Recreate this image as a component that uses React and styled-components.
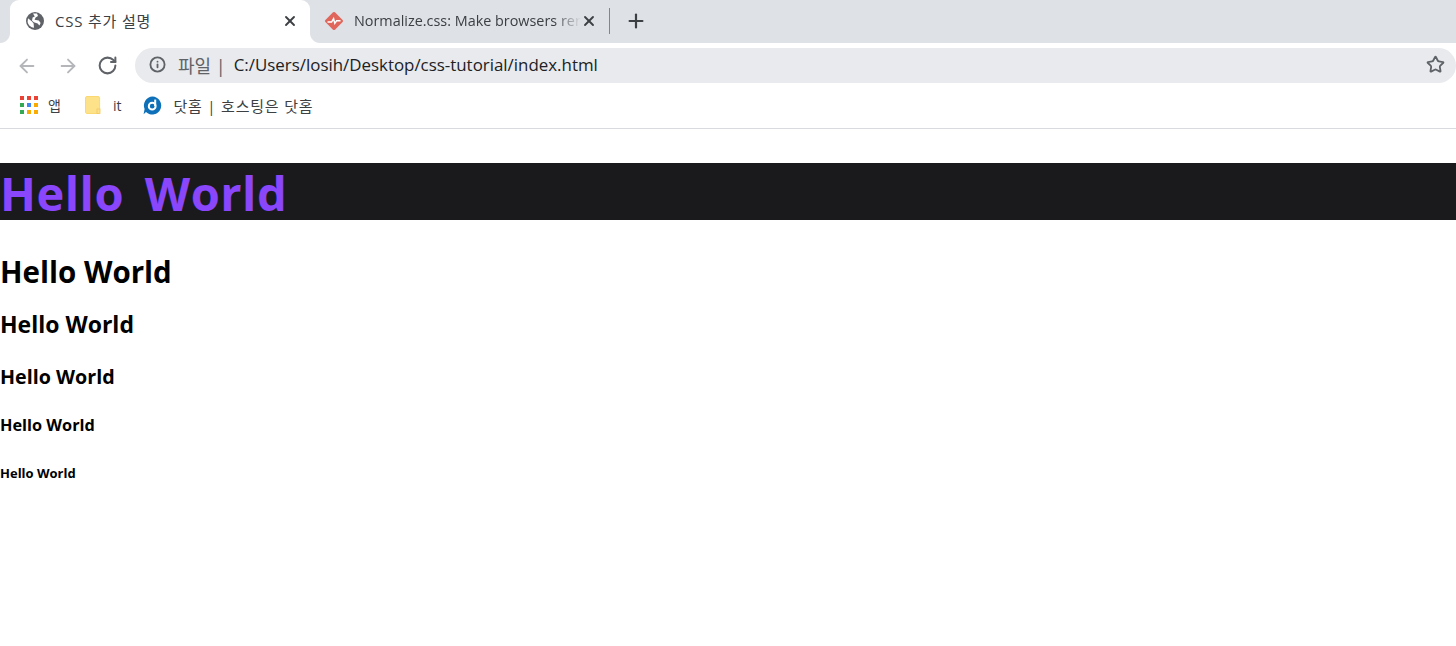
import React from 'react';
import styled, { createGlobalStyle } from 'styled-components';
import { ArrowLeft, ArrowRight, Info, Plus, RotateCw, Star, X } from 'lucide-react';

const GlobalStyle = createGlobalStyle`
  html, body {
    margin: 0;
    padding: 0;
    background: #fff;
    overflow: hidden;
    font-family: "Open Sans", "Noto Sans CJK KR", sans-serif;
  }
`;

const TabStrip = styled.div`
  display: flex;
  align-items: flex-end;
  height: 43px;
  padding-left: 10px;
  background: #dee1e6;
`;

const Tab = styled.div`
  position: relative;
  display: flex;
  align-items: center;
  box-sizing: border-box;
  width: ${(p) => p.$width}px;
  height: 43px;
  padding: 0 ${(p) => p.$right}px 2px ${(p) => p.$left}px;
  border-radius: 9px 9px 0 0;
  background: ${(p) => (p.$active ? '#fff' : 'transparent')};
  color: #3c4043;
  font-size: 14px;

  ${(p) =>
    p.$active &&
    `
    &::before, &::after {
      content: '';
      position: absolute;
      bottom: 0;
      width: 10px;
      height: 10px;
    }
    &::before {
      left: -10px;
      background: radial-gradient(circle at 0 0, #dee1e6 9.5px, #fff 10.5px);
    }
    &::after {
      right: -10px;
      background: radial-gradient(circle at 100% 0, #dee1e6 9.5px, #fff 10.5px);
    }
  `}
`;

const TabTitle = styled.span`
  flex: 1;
  margin-left: ${(p) => p.$gap}px;
  overflow: hidden;
  white-space: nowrap;
  font-size: ${(p) => p.$size}px;
  letter-spacing: ${(p) => p.$spacing || 0}px;
  -webkit-mask-image: ${(p) => (p.$fade ? 'linear-gradient(to right, #000 88%, transparent 100%)' : 'none')};
`;

const CloseIcon = styled(X)`
  flex: none;
  width: 16px;
  height: 16px;
  color: #3c4043;
  stroke-width: 2.8;
`;

const TabDivider = styled.div`
  align-self: center;
  width: 1px;
  height: 26px;
  margin: 0 0 2px 5px;
  background: #80868b;
`;

const NewTab = styled(Plus)`
  align-self: center;
  width: 22px;
  height: 22px;
  margin: 0 0 2px 15px;
  color: #3c4043;
  stroke-width: 2.4;
`;

const Toolbar = styled.div`
  display: flex;
  align-items: center;
  height: 45px;
  padding-left: 16px;
`;

const NavIcon = styled.span`
  display: flex;
  width: 24px;
  margin-right: ${(p) => p.$gap}px;
  color: ${(p) => (p.$dim ? '#b4b6b9' : '#5f6368')};
`;

const Omnibox = styled.div`
  flex: 1;
  display: flex;
  align-items: center;
  height: 35px;
  padding: 0 11px 2px 14px;
  box-sizing: border-box;
  border-radius: 18px;
  background: #e8eaed;
`;

const Security = styled.span`
  margin-left: 12px;
  color: #5f6368;
  font-size: 18px;
  white-space: pre;
`;

const Url = styled.span`
  flex: 1;
  margin-left: 8px;
  color: #202124;
  font-size: 16.9px;
`;

const BookmarkBar = styled.div`
  display: flex;
  align-items: center;
  box-sizing: border-box;
  height: 41px;
  padding: 0 0 6px 20px;
  border-bottom: 1px solid #d9dadf;
  color: #3c4043;
  font-size: 14px;
`;

const Bookmark = styled.div`
  display: flex;
  align-items: center;
  margin-right: ${(p) => p.$gap}px;
`;

const BookmarkLabel = styled.span`
  margin-left: ${(p) => p.$gap}px;
  white-space: pre;
  font-size: ${(p) => p.$size || 14}px;
  letter-spacing: ${(p) => p.$spacing || 0}px;
`;

const AppsGrid = styled.div`
  display: grid;
  grid-template-columns: repeat(3, 4px);
  grid-auto-rows: 4px;
  gap: 3px;
`;

const AppsDot = styled.i`
  display: block;
  background: ${(p) => p.$color};
`;

const Page = styled.main`
  padding-top: 34px;
  color: #000;
  font-weight: 700;
  line-height: 1;
`;

const Title = styled.h1`
  margin: 0 0 33px;
  height: 57px;
  background: #1a1a1c;
  color: #8a46fa;
  font-size: 47px;
  line-height: 60px;
  letter-spacing: 0.5px;
  word-spacing: 8px;
`;

const Heading = styled.div`
  height: ${(p) => p.$height}px;
  font-size: ${(p) => p.$size}px;
  line-height: ${(p) => p.$height}px;
  margin-bottom: ${(p) => p.$after || 0}px;
`;

const appsColors = ['#ea4335', '#ea4335', '#ea4335', '#34a853', '#4285f4', '#f9ab00', '#34a853', '#f9ab00', '#f9ab00'];

const GlobeIcon = () => (
  <svg width="18" height="18" viewBox="0 0 18 18">
    <circle cx="9" cy="9" r="9" fill="#5f6368" />
    <path
      d="M2 6.2 6 9.6 7.6 11.4 8 15.8C5 15.6 2 13 1.6 9.8ZM7 1.4 11 1.6 12 4 9.6 5.6 8.6 7.8 12.8 8.6 14.6 11 13.4 13.6 11.6 11.4 7.8 10.2 6 8.4 6.6 5.6 8.8 4.4Z"
      fill="#fff"
    />
  </svg>
);

const DiamondIcon = () => (
  <svg width="20" height="20" viewBox="0 0 20 20">
    <rect x="3.2" y="3.2" width="13.6" height="13.6" rx="1.4" transform="rotate(45 10 10)" fill="#e0665c" />
    <path d="M3.5 11H7.6L9.6 7.5 10.8 12.4 12.6 9.8H16.5" fill="none" stroke="#fff" strokeWidth="1.4" />
  </svg>
);

const FolderIcon = () => (
  <svg width="16" height="18" viewBox="0 0 16 18">
    <path d="M2 .5H13A1.6 1.6 0 0 1 14.6 2V16A1.6 1.6 0 0 1 13 17.5H2A1.6 1.6 0 0 1 .5 16V2A1.6 1.6 0 0 1 2 .5Z" fill="#fee28a" stroke="#fbd872" />
    <rect x="12" y="13" width="3" height="4.5" fill="#fee28a" stroke="#eec764" strokeWidth="0.8" />
  </svg>
);

const DothomeIcon = () => (
  <svg width="19" height="19" viewBox="0 0 19 19">
    <path d="M9.5 0.5A9 9 0 1 1 3 16L0.6 18.2 1.6 13A9 9 0 0 1 9.5.5Z" fill="#0e70b8" />
    <circle cx="9.2" cy="10.2" r="3.4" fill="none" stroke="#fff" strokeWidth="2" />
    <path d="M12.2 10V3.6" stroke="#fff" strokeWidth="2" />
  </svg>
);

const App = () => (
  <>
    <GlobalStyle />
    <TabStrip>
      <Tab $active $width={300} $left={16} $right={12}>
        <GlobeIcon />
        <TabTitle $gap={11} $size={15} $spacing={0.8}>CSS 추가 설명</TabTitle>
        <CloseIcon />
      </Tab>
      <Tab $width={294} $left={14} $right={7}>
        <DiamondIcon />
        <TabTitle $gap={10} $size={14.4} $fade>Normalize.css: Make browsers render all elements</TabTitle>
        <CloseIcon />
      </Tab>
      <TabDivider />
      <NewTab />
    </TabStrip>
    <Toolbar>
      <NavIcon $dim $gap={17}><ArrowLeft size={22} strokeWidth={2} /></NavIcon>
      <NavIcon $dim $gap={16}><ArrowRight size={22} strokeWidth={2} /></NavIcon>
      <NavIcon $gap={14}><RotateCw size={21} strokeWidth={2.3} /></NavIcon>
      <Omnibox>
        <Info size={17} color="#5f6368" strokeWidth={2.6} />
        <Security>파일 |</Security>
        <Url>C:/Users/losih/Desktop/css-tutorial/index.html</Url>
        <Star size={19} color="#5f6368" strokeWidth={2.3} />
      </Omnibox>
    </Toolbar>
    <BookmarkBar>
      <Bookmark $gap={24}>
        <AppsGrid>
          {appsColors.map((color, index) => (
            <AppsDot key={index} $color={color} />
          ))}
        </AppsGrid>
        <BookmarkLabel $gap={10}>앱</BookmarkLabel>
      </Bookmark>
      <Bookmark $gap={22}>
        <FolderIcon />
        <BookmarkLabel $gap={12}>it</BookmarkLabel>
      </Bookmark>
      <Bookmark $gap={0}>
        <DothomeIcon />
        <BookmarkLabel $gap={11} $size={15} $spacing={0.8}>닷홈 | 호스팅은 닷홈</BookmarkLabel>
      </Bookmark>
    </BookmarkBar>
    <Page>
      <Title>Hello World</Title>
      <Heading $size={29.5} $height={38} $after={18}>Hello World</Heading>
      <Heading $size={23} $height={30} $after={25}>Hello World</Heading>
      <Heading $size={19.7} $height={26} $after={24}>Hello World</Heading>
      <Heading $size={16.3} $height={22} $after={28}>Hello World</Heading>
      <Heading $size={13} $height={18}>Hello World</Heading>
    </Page>
  </>
);

export default App;
